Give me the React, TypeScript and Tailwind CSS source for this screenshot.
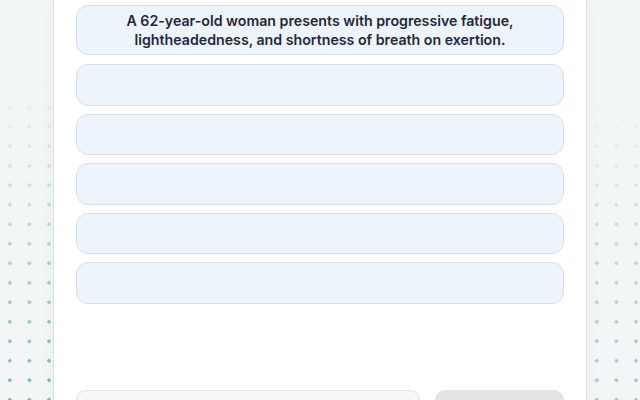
const stem =
  "A 62-year-old woman presents with progressive fatigue, lightheadedness, and shortness of breath on exertion.";

// empty answer slots below the stem
const slots = [0, 1, 2, 3, 4];

function DotStrip({ tone }: { tone: "teal" | "gray" }) {
  return (
    <div className="relative h-full flex-1 bg-[#f3f6f7]">
      <div
        className={
          tone === "teal"
            ? "absolute inset-0 bg-[radial-gradient(circle,#7dbdb0_1.5px,transparent_2px)] bg-[length:19.6px_19.5px] [mask-image:linear-gradient(to_bottom,transparent_18%,rgba(0,0,0,0.35)_45%,black_95%)]"
            : "absolute inset-0 bg-[radial-gradient(circle,#aec3c4_1.5px,transparent_2px)] bg-[length:19.6px_19.5px] [mask-image:linear-gradient(to_bottom,transparent_25%,rgba(0,0,0,0.6)_60%,black_95%)]"
        }
      />
    </div>
  );
}

export default function App() {
  return (
    <div className="flex h-[400px] w-[640px] overflow-hidden bg-[#f3f6f7] font-['Inter',sans-serif]">
      <DotStrip tone="teal" />

      <main className="relative z-10 flex h-full w-[534px] shrink-0 flex-col border-x border-[#dcdfe3] bg-white px-[22px] pt-[5px] shadow-[0_0_16px_rgba(15,23,42,0.045)]">
        <div className="flex h-[50px] items-center justify-center rounded-xl border border-[#d6dfe8] bg-[#edf4fb] px-6 text-center text-[14.2px] font-semibold leading-[19.5px] text-[#1e293b]">
          {stem}
        </div>

        <div className="mt-[9px] flex flex-col gap-2">
          {slots.map((i) => (
            <div
              key={i}
              className="h-[41.5px] rounded-xl border border-[#d6dfe8] bg-[#edf4fb]"
            />
          ))}
        </div>

        <div className="mt-auto flex gap-[15px]">
          <button className="h-[10px] w-[344px] rounded-t-xl border border-b-0 border-[#e2e4e7] bg-[#f7f7f8]" />
          <button className="h-[10px] flex-1 rounded-t-xl bg-[#e4e4e5]" />
        </div>
      </main>

      <DotStrip tone="gray" />
    </div>
  );
}
